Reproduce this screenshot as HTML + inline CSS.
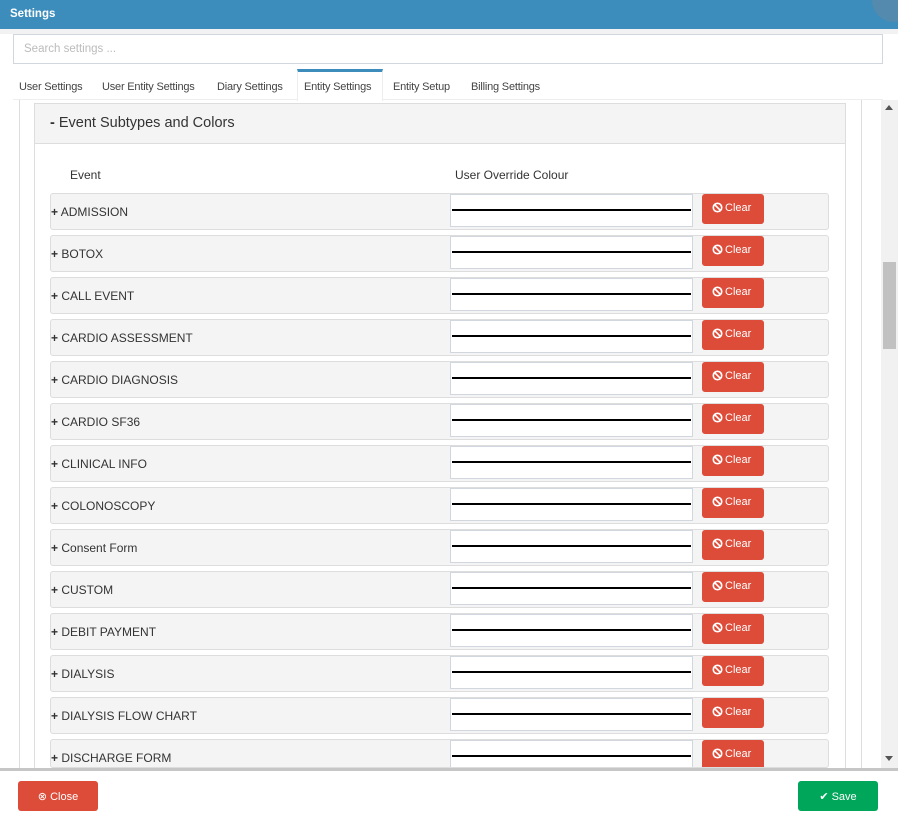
<!DOCTYPE html>
<html><head><style>
*{box-sizing:border-box;margin:0;padding:0}
body{width:898px;height:818px;overflow:hidden;background:#fff;font-family:"Liberation Sans",sans-serif;color:#333;position:relative}
.hdr{position:absolute;left:0;top:0;width:898px;height:29px;background:#3c8dbc;color:#fff;font-weight:bold;font-size:11.5px;padding:8px 10px}
.circ{position:absolute;left:872px;top:-22px;width:44px;height:44px;border-radius:50%;background:#5a8aaa;opacity:.8}
.gap{position:absolute;left:0;top:29px;width:898px;height:5px;background:#f2f2f2}
.search{position:absolute;left:13px;top:34px;width:870px;height:30px;border:1px solid #d2d6de;font-size:11.5px;color:#bbb;padding:8px 10px}
.tabs{position:absolute;left:13px;top:69px;width:870px;height:31px;border-bottom:1px solid #eee}
.tab{position:absolute;top:0;height:31px;font-size:11px;color:#444;padding-top:12px;letter-spacing:-0.2px}
.tab.act{border-top:3px solid #3c8dbc;border-left:1px solid #eee;border-right:1px solid #eee;background:#fff;height:32px;padding-top:9px;padding-left:6px}
.scroll{position:absolute;left:0;top:100px;width:898px;height:668px;overflow:hidden}
.outer{position:absolute;left:19px;top:0;width:843px;height:700px;border-left:1px solid #ddd;border-right:1px solid #ddd}
.panel{position:absolute;left:34px;top:3px;width:812px;height:700px;border:1px solid #ddd}
.ph{height:40px;background:#f4f4f4;border-bottom:1px solid #ddd;font-size:14.5px;padding:11px 15px;color:#333}
.colh{position:absolute;top:68px;font-size:12px}
.row{position:absolute;left:50px;width:779px;height:37px;background:#f4f4f4;border:1px solid #ddd;border-radius:3px}
.row .l{position:absolute;left:0;top:11px;font-size:12px}
.inp{position:absolute;left:399px;top:0;width:243px;height:33px;background:#fff;border:1px solid #d2d6de}
.inp:after{content:"";position:absolute;left:1px;right:1px;top:14px;height:2px;background:#000}
.clr{position:absolute;left:651px;top:0;width:62px;height:30px;background:#dd4b39;border-radius:3px;color:#fff;font-size:11px;padding:8px 0 0 10px}
.clr svg{vertical-align:-2px;margin-right:2px}
.sb{position:absolute;left:881px;top:100px;width:17px;height:668px;background:#f1f1f1}
.thumb{position:absolute;left:883px;top:262px;width:13px;height:87px;background:#c1c1c1}
.foot{position:absolute;left:0;top:768px;width:898px;height:3px;background:#c6c6c6}
.btn{position:absolute;top:781px;width:80px;height:30px;border-radius:3px;color:#fff;font-size:11px;text-align:center;padding-top:9px}
</style></head><body>
<div class="hdr">Settings</div><div class="circ"></div>
<div class="gap"></div>
<div class="search">Search settings ...</div>
<div class="tabs">
<div class="tab" style="left:6px">User Settings</div>
<div class="tab" style="left:89px">User Entity Settings</div>
<div class="tab" style="left:204px">Diary Settings</div>
<div class="tab act" style="left:284px;width:86px">Entity Settings</div>
<div class="tab" style="left:380px">Entity Setup</div>
<div class="tab" style="left:458px">Billing Settings</div>
</div>
<div class="scroll">
<div class="outer"></div>
<div class="panel"><div class="ph"><b>-</b> Event Subtypes and Colors</div></div>
<div class="colh" style="left:70px">Event</div>
<div class="colh" style="left:455px">User Override Colour</div>
</div>
<div id="rows"></div>
<div class="sb"></div>
<div style="position:absolute;left:885px;top:105px;width:0;height:0;border-left:4px solid transparent;border-right:4px solid transparent;border-bottom:5px solid #555"></div>
<div style="position:absolute;left:885px;top:756px;width:0;height:0;border-left:4px solid transparent;border-right:4px solid transparent;border-top:5px solid #555"></div>
<div class="thumb"></div>
<div class="foot"></div>
<div class="btn" style="left:18px;background:#dd4b39">&#x2297; Close</div>
<div class="btn" style="left:798px;background:#00a65a">&#x2714; Save</div>
<script>
var n=["ADMISSION","BOTOX","CALL EVENT","CARDIO ASSESSMENT","CARDIO DIAGNOSIS","CARDIO SF36","CLINICAL INFO","COLONOSCOPY","Consent Form","CUSTOM","DEBIT PAYMENT","DIALYSIS","DIALYSIS FLOW CHART","DISCHARGE FORM"];
var h="";var ic='<svg width="11" height="11" viewBox="0 0 12 12"><circle cx="6" cy="6" r="4.6" fill="none" stroke="#fff" stroke-width="1.8"/><line x1="2.8" y1="2.8" x2="9.2" y2="9.2" stroke="#fff" stroke-width="1.8"/></svg>';
n.forEach(function(t,i){var y=193+42*i;var hh=Math.min(37,768-y);h+='<div class="row" style="top:'+y+'px;height:'+hh+'px;overflow:hidden"><div class="l"><b>+</b> '+t+'</div><div class="inp"></div><div class="clr">'+ic+'Clear</div></div>';});
document.getElementById("rows").innerHTML=h;
</script>
</body></html>
